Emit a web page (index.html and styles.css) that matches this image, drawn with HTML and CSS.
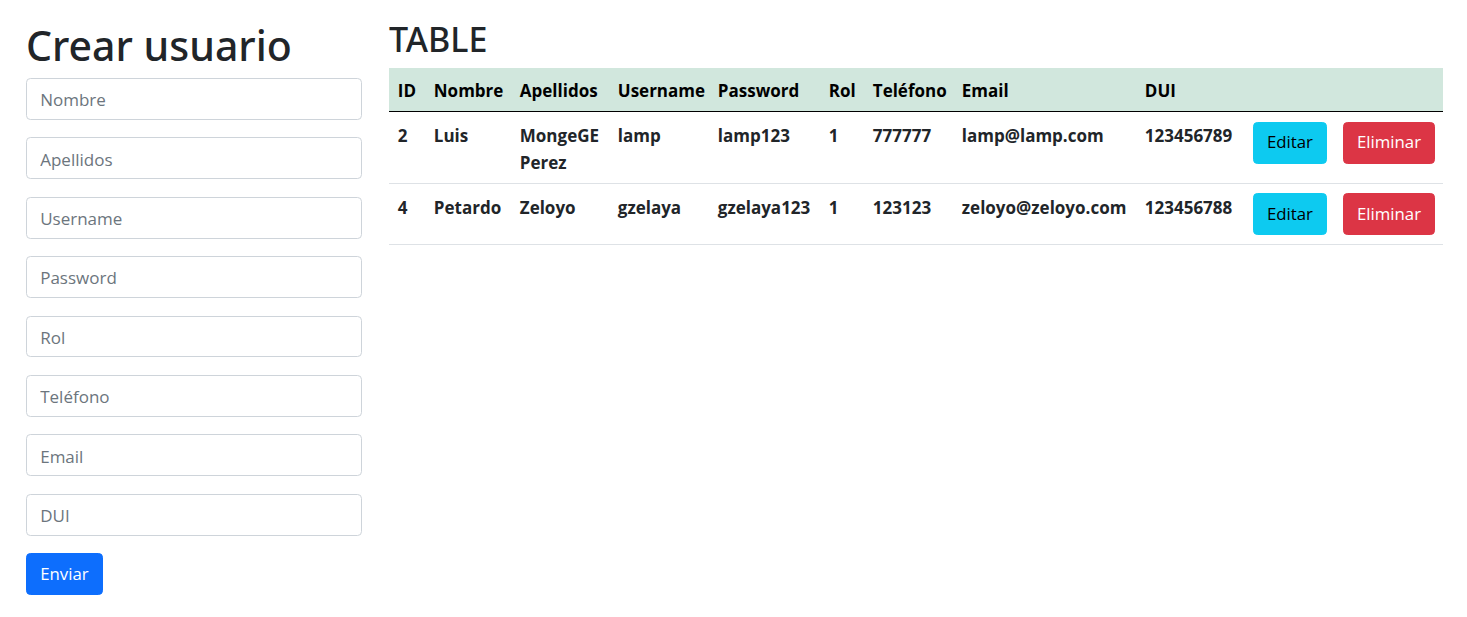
FILE: index.html
```html
<!DOCTYPE html>
<html lang="es">
<head>
<meta charset="utf-8">
<title>Usuarios</title>
<link rel="stylesheet" href="styles.css">
</head>
<body>
<div class="page">
  <div class="form-col">
    <h1 class="title">Crear usuario</h1>
    <form class="user-form">
      <input class="field" type="text" placeholder="Nombre">
      <input class="field" type="text" placeholder="Apellidos">
      <input class="field" type="text" placeholder="Username">
      <input class="field" type="text" placeholder="Password">
      <input class="field" type="text" placeholder="Rol">
      <input class="field" type="text" placeholder="Teléfono">
      <input class="field" type="text" placeholder="Email">
      <input class="field" type="text" placeholder="DUI">
      <button class="btn btn-primary" type="button">Enviar</button>
    </form>
  </div>
  <div class="table-col">
    <h2 class="subtitle">TABLE</h2>
    <table class="data-table">
      <colgroup>
        <col class="c-id"><col class="c-nombre"><col class="c-apellidos"><col class="c-username"><col class="c-password"><col class="c-rol"><col class="c-tel"><col class="c-email"><col class="c-dui"><col class="c-edit"><col class="c-del">
      </colgroup>
      <thead>
        <tr>
          <th>ID</th><th>Nombre</th><th>Apellidos</th><th>Username</th><th>Password</th><th>Rol</th><th>Teléfono</th><th>Email</th><th>DUI</th><th></th><th></th>
        </tr>
      </thead>
      <tbody>
        <tr>
          <td>2</td><td>Luis</td><td class="wrap">MongeGE Perez</td><td>lamp</td><td>lamp123</td><td>1</td><td>777777</td><td>lamp@lamp.com</td><td>123456789</td>
          <td class="act"><button class="btn btn-info" type="button">Editar</button></td>
          <td class="act"><button class="btn btn-danger" type="button">Eliminar</button></td>
        </tr>
        <tr>
          <td>4</td><td>Petardo</td><td class="wrap">Zeloyo</td><td>gzelaya</td><td>gzelaya123</td><td>1</td><td>123123</td><td>zeloyo@zeloyo.com</td><td>123456788</td>
          <td class="act"><button class="btn btn-info" type="button">Editar</button></td>
          <td class="act"><button class="btn btn-danger" type="button">Eliminar</button></td>
        </tr>
      </tbody>
    </table>
  </div>
</div>
</body>
</html>
```
FILE: styles.css
```css
html, body {
  margin: 0;
  padding: 0;
  background: #fff;
}
body {
  font-family: "Open Sans", "Noto Sans", sans-serif;
  font-size: 17px;
  line-height: 26.4px;
  color: #212529;
}
.page {
  display: flex;
  gap: 27px;
  padding: 16.4px 24px 0 26px;
}
.form-col {
  width: 336px;
  flex: none;
}
.table-col {
  width: 1054px;
  flex: none;
}
.title {
  font-family: "Noto Sans", "Open Sans", sans-serif;
  font-size: 41px;
  font-weight: 500;
  line-height: 52.8px;
  padding-top: 2.5px;
  margin: 0 0 6.3px;
}
.subtitle {
  font-family: "Noto Sans", "Open Sans", sans-serif;
  font-size: 34px;
  font-weight: 500;
  line-height: 42.2px;
  padding-top: 2px;
  margin: 0 0 7.6px;
}
.user-form {
  margin: 0;
}
.field {
  display: block;
  box-sizing: border-box;
  width: 100%;
  height: 41.8px;
  padding: 7.4px 13.2px 5.8px;
  margin: 0 0 17.6px;
  font-family: inherit;
  font-size: 17px;
  line-height: 26.4px;
  color: #212529;
  background: #fff;
  border: 1px solid #ced4da;
  border-radius: 4.4px;
}
.field::placeholder {
  color: #6c757d;
  opacity: 1;
}
.btn {
  display: inline-block;
  box-sizing: border-box;
  height: 41.8px;
  padding: 6.6px 13.2px;
  font-family: inherit;
  font-size: 16.8px;
  font-weight: 400;
  line-height: 26.4px;
  border: 1px solid transparent;
  border-radius: 4.4px;
  white-space: nowrap;
  cursor: pointer;
}
.btn-primary {
  background: #0d6efd;
  border-color: #0d6efd;
  color: #fff;
}
.btn-info {
  background: #0dcaf0;
  border-color: #0dcaf0;
  color: #000;
}
.btn-danger {
  background: #dc3545;
  border-color: #dc3545;
  color: #fff;
}
.data-table {
  width: 100%;
  table-layout: fixed;
  border-collapse: separate;
  border-spacing: 0;
  font-weight: 700;
  color: #212529;
}
.data-table th,
.data-table td {
  padding: 11px 8.8px 6.9px;
  text-align: left;
  vertical-align: top;
  white-space: nowrap;
  border-bottom: 1px solid #dee2e6;
}
.data-table td.act {
  padding: 9.6px 8.8px 8.3px;
}
.data-table td.wrap {
  white-space: normal;
}
.data-table thead th {
  padding: 10px 8.8px 6.6px;
  background: #d1e7dd;
  color: #000;
  border-bottom: 1.4px solid #000;
}
.c-id { width: 36px; }
.c-nombre { width: 86px; }
.c-apellidos { width: 98px; }
.c-username { width: 100px; }
.c-password { width: 111px; }
.c-rol { width: 44px; }
.c-tel { width: 89px; }
.c-email { width: 183px; }
.c-dui { width: 108px; }
.c-edit { width: 90px; }
.c-del { width: 109px; }
```
